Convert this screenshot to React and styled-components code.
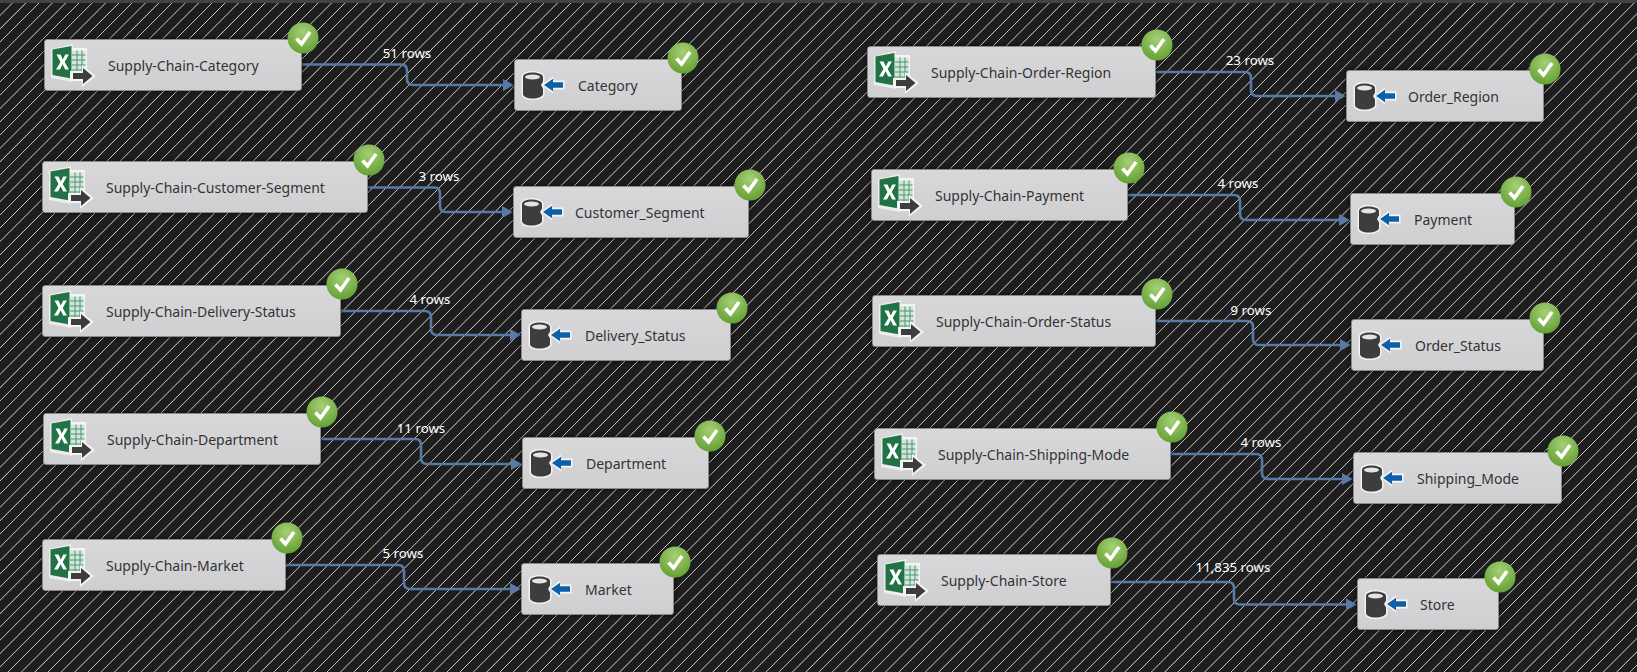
import React from "react";
import styled, { createGlobalStyle } from "styled-components";

const GlobalStyle = createGlobalStyle`
  html, body { margin: 0; padding: 0; background: #1e1e1e; }
`;

const Canvas = styled.div`
  position: relative;
  width: 1637px;
  height: 672px;
  overflow: hidden;
  border-top: 3px solid #40434a;
  box-sizing: border-box;
  background-color: #1e1e1e;
  background-image: repeating-linear-gradient(
    135deg,
    #1e1e1e 0,
    #1e1e1e 8.2px,
    #c0c0c0 8.7px,
    #c0c0c0 9px,
    #1e1e1e 9.4px
  );
`;

const Wires = styled.svg`
  position: absolute;
  left: 0;
  top: -3px;
  width: 1637px;
  height: 672px;
`;

const NodeBox = styled.div`
  position: absolute;
  box-sizing: border-box;
  display: flex;
  align-items: center;
  height: 52px;
  background: linear-gradient(#d8d8db, #cfcfd2);
  border: 1px solid #8a8a8a;
  border-radius: 3px;
  box-shadow: 0 0 4px rgba(0, 0, 0, 0.7);
  font-family: "Noto Sans", sans-serif;
  font-size: 14px;
  color: #333;
  white-space: nowrap;
`;

const IconSlot = styled.span`
  display: flex;
  flex: none;
  width: 48px;
  height: 44px;
  margin-left: 4px;
`;

const NodeLabel = styled.span`
  margin-left: ${(p) => 11 + p.$nudge}px;
`;

const Badge = styled.svg`
  position: absolute;
  top: -18px;
  right: -18px;
  width: 32px;
  height: 32px;
`;

const RowLabel = styled.span`
  position: absolute;
  transform: translateX(-50%);
  font-family: "Noto Sans", sans-serif;
  font-size: 13.3px;
  line-height: 16px;
  color: #fff;
  white-space: nowrap;
`;

const ExcelIcon = () => (
  <svg width="48" height="44" viewBox="0 0 48 44">
    <path d="M2 6 24 1v38L2 35Z" fill="#f4f4f4" opacity=".8" />
    <path d="M22 5h16v28H22Z" fill="#f4f4f4" />
    <path d="M3.500 6.500 22.500 3v32.500L3.500 32Z" fill="#217346" />
    <path d="M23 7.500h13.500v23H23Z" fill="#d3e6da" />
    <path d="M23 12h13.500M23 17h13.500M23 22h13.500M23 27h13.500M28 7.500v23M33 7.500v23" stroke="#4d9470" strokeWidth="1" fill="none" />
    <path d="M7.500 11.500h4l2.300 5 2.500-5h3.600l-4.200 7.400 4.300 7.600h-3.800l-2.600-5.300-2.600 5.300H7l4.500-7.600Z" fill="#fff" />
    <path d="M21 28h12v-6l14 11-14 11v-6H21Z" fill="#f4f4f4" />
    <path d="M24 30h10v-5l9.500 8-9.500 8v-5H24Z" fill="#3d3d3d" />
  </svg>
);

const DestIcon = () => (
  <svg width="48" height="44" viewBox="0 0 48 44">
    <path d="M2.500 14c0-4 5-6 11-6s12 2 12 6v5l-2 3 2 3v6c0 4-6 6-12 6s-11-2-11-6Z" fill="#f2f2f2" />
    <path d="M4 14c0-3 4.500-4.500 9.500-4.500S24 11 24 14v4.500l-2 3.500 2 3.500V31c0 2.500-5 4.500-10.500 4.500S4 33.500 4 31Z" fill="#3d3d3d" />
    <ellipse cx="13.500" cy="14" rx="7.500" ry="2.600" fill="#e4e4e4" />
    <path d="M23 22 34 13.500v4h11.500v9H34v4Z" fill="#f6f6f6" />
    <path d="M25 22 34 15.800v3.400h10v5.600H34v3.400Z" fill="#0c5fa8" />
  </svg>
);

const CheckBadge = ({ id }) => (
  <Badge viewBox="0 0 32 32">
    <defs>
      <radialGradient id={id} cx="50%" cy="30%" r="70%">
        <stop offset="0" stopColor="#a6d076" />
        <stop offset="1" stopColor="#64a034" />
      </radialGradient>
    </defs>
    <circle cx="16" cy="16" r="15.500" fill={`url(#${id})`} />
    <path d="M9.500 16.500l5 5.500L23 10" fill="none" stroke="#fff" strokeWidth="3.600" />
  </Badge>
);

const flows = [
  { src: [44, 39, 258, "Supply-Chain-Category"], dst: [514, 59, 168, "Category"], rows: "51 rows", lx: 407, ly: 45, bend: 407, sy: 64.5, dy: 85 },
  { src: [42, 161, 326, "Supply-Chain-Customer-Segment"], dst: [513, 186, 236, "Customer_Segment", -2], rows: "3 rows", lx: 439, ly: 168, bend: 440, sy: 187.5, dy: 212 },
  { src: [42, 285, 299, "Supply-Chain-Delivery-Status"], dst: [521, 309, 210, "Delivery_Status"], rows: "4 rows", lx: 430, ly: 291, bend: 431, sy: 311, dy: 335 },
  { src: [43, 413, 278, "Supply-Chain-Department"], dst: [522, 437, 187, "Department"], rows: "11 rows", lx: 421, ly: 420, bend: 421, sy: 439, dy: 464 },
  { src: [42, 539, 244, "Supply-Chain-Market"], dst: [521, 563, 153, "Market"], rows: "5 rows", lx: 403, ly: 545, bend: 404, sy: 565, dy: 589 },
  { src: [867, 46, 289, "Supply-Chain-Order-Region"], dst: [1346, 70, 198, "Order_Region", -2], rows: "23 rows", lx: 1250, ly: 52, bend: 1251, sy: 72, dy: 96 },
  { src: [871, 169, 257, "Supply-Chain-Payment"], dst: [1350, 193, 165, "Payment"], rows: "4 rows", lx: 1238, ly: 175, bend: 1240, sy: 195, dy: 220 },
  { src: [872, 295, 284, "Supply-Chain-Order-Status"], dst: [1351, 319, 193, "Order_Status"], rows: "9 rows", lx: 1251, ly: 302, bend: 1253, sy: 321, dy: 345 },
  { src: [874, 428, 297, "Supply-Chain-Shipping-Mode"], dst: [1353, 452, 209, "Shipping_Mode"], rows: "4 rows", lx: 1261, ly: 434, bend: 1262, sy: 454, dy: 479 },
  { src: [877, 554, 234, "Supply-Chain-Store"], dst: [1357, 578, 142, "Store", -1], rows: "11,835 rows", lx: 1233, ly: 559, bend: 1234, sy: 582, dy: 604.5 },
];

const Node = ({ at, icon, id }) => {
  const [x, y, w, label, nudge = 0] = at;
  return (
    <NodeBox style={{ left: x, top: y - 3, width: w }}>
      <IconSlot>{icon}</IconSlot>
      <NodeLabel $nudge={nudge}>{label}</NodeLabel>
      <CheckBadge id={id} />
    </NodeBox>
  );
};

export default function App() {
  return (
    <>
      <GlobalStyle />
      <Canvas>
        <Wires viewBox="0 0 1637 672">
          {flows.map((f, i) => {
            const sx = f.src[0] + f.src[2];
            const ex = f.dst[0];
            return (
              <g key={i}>
                <path
                  d={`M${sx} ${f.sy}H${f.bend - 6}q6 0 6 6V${f.dy - 6}q0 6 6 6H${ex - 8}`}
                  fill="none"
                  stroke="#5a7aa6"
                  strokeWidth="2.600"
                />
                <path d={`M${ex - 11} ${f.dy - 6}L${ex} ${f.dy}L${ex - 11} ${f.dy + 6}Z`} fill="#5a7aa6" />
              </g>
            );
          })}
        </Wires>
        {flows.map((f, i) => (
          <React.Fragment key={i}>
            <Node at={f.src} icon={<ExcelIcon />} id={`s${i}`} />
            <Node at={f.dst} icon={<DestIcon />} id={`d${i}`} />
            <RowLabel style={{ left: f.lx, top: f.ly - 3 }}>{f.rows}</RowLabel>
          </React.Fragment>
        ))}
      </Canvas>
    </>
  );
}
